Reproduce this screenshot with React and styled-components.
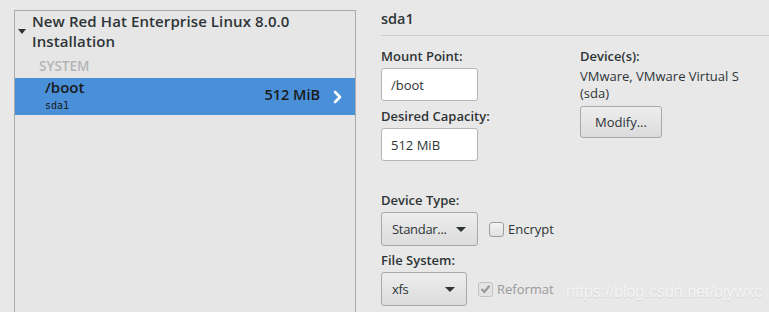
import styled, { createGlobalStyle } from 'styled-components';

const GlobalStyle = createGlobalStyle`
    html, body {
        margin: 0;
        padding: 0;
        background: #e8e8e8;
        font-family: "Open Sans", "DejaVu Sans", sans-serif;
        color: #2e3436;
    }
`;

const Page = styled.div`
    width: 769px;
    height: 312px;
    overflow: hidden;
    display: flex;
    padding: 10px 0 0 14px;
    box-sizing: border-box;
    position: relative;
`;

const LeftPanel = styled.div`
    width: 342px;
    height: 320px;
    flex-shrink: 0;
    box-sizing: border-box;
    border: 1px solid #ababab;
    border-bottom: none;
    background: #e6e6e6;
`;

const TreeHeader = styled.div`
    display: flex;
    align-items: flex-start;
    padding: 0 0 0 3px;
`;

const Expander = styled.span`
    width: 0;
    height: 0;
    border-left: 4px solid transparent;
    border-right: 4px solid transparent;
    border-top: 5px solid #2e3436;
    margin: 18px 6px 0 0;
`;

const TreeTitle = styled.div`
    font-size: 15px;
    font-weight: 600;
    line-height: 20px;
    color: #2e3436;
    letter-spacing: 0.1px;
`;

const GroupLabel = styled.div`
    font-size: 13.5px;
    font-weight: 600;
    color: #b4b4b4;
    padding: 7px 0 0 24px;
    line-height: 17px;
`;

const Row = styled.div`
    height: 37px;
    margin-top: 3px;
    background: ${p => (p.selected ? '#4a90d9' : 'transparent')};
    display: flex;
    align-items: center;
    padding: 0 13px 0 30px;
`;

const RowMain = styled.div`
    flex: 1;
    align-self: flex-start;
    display: flex;
    flex-direction: column;
    padding-top: 1px;
`;

const RowName = styled.div`
    font-size: 15px;
    font-weight: 600;
    line-height: 17px;
    color: #1a1a1a;
`;

const RowDev = styled.div`
    font-family: "DejaVu Sans Mono", monospace;
    font-size: 10px;
    line-height: 14px;
    color: #1a1a1a;
    margin-top: 3px;
`;

const RowSize = styled.div`
    font-size: 14.5px;
    font-weight: 600;
    color: #1a1a1a;
    margin: -4px 13px 0 0;
`;

const RightPanel = styled.div`
    flex: 1;
    margin-left: 25px;
    display: flex;
    flex-direction: column;
`;

const Heading = styled.div`
    font-size: 14.5px;
    font-weight: 600;
    line-height: 17px;
    padding: 0 0 8px 0;
    border-bottom: 1px solid #cfcfcf;
    color: #2e3436;
`;

const Columns = styled.div`
    display: flex;
    margin-top: 12px;
`;

const Column = styled.div`
    display: flex;
    flex-direction: column;
    width: ${p => p.w || 'auto'};
`;

const Label = styled.div`
    font-size: 13px;
    font-weight: 600;
    line-height: 17px;
    color: #2e3436;
    margin-top: ${p => p.mt || 0}px;
`;

const Entry = styled.div`
    width: 97px;
    height: 33px;
    box-sizing: border-box;
    border: 1px solid #b6b6b3;
    border-radius: 3px;
    background: #fff;
    font-size: 13px;
    display: flex;
    align-items: center;
    padding-left: 9px;
    margin-top: 3px;
    color: #2e3436;
`;

const Info = styled.div`
    font-size: 13px;
    line-height: 17px;
    color: #2e3436;
    margin-top: 3px;
`;

const Button = styled.div`
    width: 82px;
    height: 32px;
    box-sizing: border-box;
    border: 1px solid #a8a8a8;
    border-radius: 3px;
    background: linear-gradient(#ededed, #dcdcdc);
    font-size: 13px;
    display: flex;
    align-items: center;
    justify-content: center;
    margin-top: 4px;
    color: #2e3436;
`;

const ControlRow = styled.div`
    display: flex;
    align-items: center;
    margin-top: 3px;
`;

const Combo = styled.div`
    width: ${p => p.w}px;
    height: 34px;
    box-sizing: border-box;
    border: 1px solid #a8a8a8;
    border-radius: 3px;
    background: linear-gradient(#ededed, #dcdcdc);
    font-size: 13px;
    letter-spacing: -0.3px;
    display: flex;
    align-items: center;
    justify-content: space-between;
    padding: 0 11px 0 10px;
    color: #2e3436;
`;

const Arrow = styled.span`
    width: 0;
    height: 0;
    border-left: 5px solid transparent;
    border-right: 5px solid transparent;
    border-top: 5px solid #2e3436;
    flex-shrink: 0;
`;

const Check = styled.span`
    width: 15px;
    height: 15px;
    box-sizing: border-box;
    border: 1px solid ${p => (p.disabled ? '#c2c2c2' : '#9c9c9c')};
    border-radius: 3px;
    background: ${p => (p.disabled ? '#e4e4e4' : 'linear-gradient(#f4f4f4, #e0e0e0)')};
    margin: 0 4px 0 11px;
    display: flex;
    align-items: center;
    justify-content: center;
`;

const CheckText = styled.span`
    font-size: 13px;
    color: ${p => (p.disabled ? '#9a9a9a' : '#2e3436')};
`;

const Watermark = styled.div`
    position: absolute;
    left: 566px;
    top: 282px;
    font-family: "Liberation Sans", Arial, sans-serif;
    font-size: 16.5px;
    color: #f4f4f4;
    text-shadow: 0 1px 1px #d4d4d4;
    letter-spacing: -0.2px;
`;

const Chevron = () => (
    <svg width="9" height="14" viewBox="0 0 9 14">
        <path d="M2 2 L7 7 L2 12" stroke="#fff" strokeWidth="2.6" fill="none" strokeLinecap="round" strokeLinejoin="round" />
    </svg>
);

const Tick = () => (
    <svg width="11" height="10" viewBox="0 0 11 10">
        <path d="M1.5 5 L4.3 8 L9.5 1.8" stroke="#9a9a9a" strokeWidth="2.2" fill="none" strokeLinejoin="round" />
    </svg>
);

export default function App() {
    return (
        <>
            <GlobalStyle />
            <Page>
                <LeftPanel>
                    <TreeHeader>
                        <Expander />
                        <TreeTitle>
                            New Red Hat Enterprise Linux 8.0.0<br />Installation
                        </TreeTitle>
                    </TreeHeader>
                    <GroupLabel>SYSTEM</GroupLabel>
                    <Row selected>
                        <RowMain>
                            <RowName>/boot</RowName>
                            <RowDev>sda1</RowDev>
                        </RowMain>
                        <RowSize>512 MiB</RowSize>
                        <Chevron />
                    </Row>
                </LeftPanel>
                <RightPanel>
                    <Heading>sda1</Heading>
                    <Columns>
                        <Column w="199px">
                            <Label>Mount Point:</Label>
                            <Entry>/boot</Entry>
                            <Label mt={7}>Desired Capacity:</Label>
                            <Entry>512 MiB</Entry>
                            <Label mt={31}>Device Type:</Label>
                            <ControlRow>
                                <Combo w={97}>Standar... <Arrow /></Combo>
                                <Check />
                                <CheckText>Encrypt</CheckText>
                            </ControlRow>
                            <Label mt={6}>File System:</Label>
                            <ControlRow>
                                <Combo w={86}>xfs <Arrow /></Combo>
                                <Check disabled><Tick /></Check>
                                <CheckText disabled>Reformat</CheckText>
                            </ControlRow>
                        </Column>
                        <Column>
                            <Label>Device(s):</Label>
                            <Info>VMware, VMware Virtual S<br />(sda)</Info>
                            <Button>Modify...</Button>
                        </Column>
                    </Columns>
                </RightPanel>
                <Watermark>https://blog.csdn.net/bjywxc</Watermark>
            </Page>
        </>
    );
}
